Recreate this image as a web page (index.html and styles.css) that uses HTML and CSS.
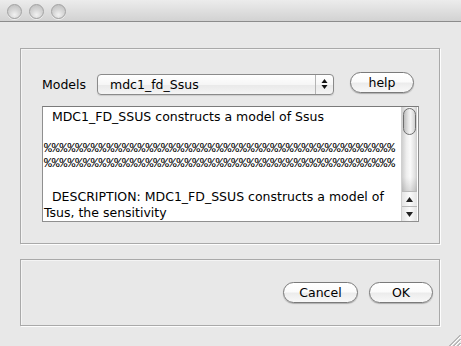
FILE: index.html
```html
<!DOCTYPE html>
<html>
<head>
<meta charset="utf-8">
<link rel="stylesheet" href="styles.css">
</head>
<body>
<div class="window">
  <div class="titlebar">
    <span class="light"></span><span class="light"></span><span class="light"></span>
  </div>
  <div class="content">
    <section class="panel panel-main">
      <div class="row">
        <span class="label">Models</span>
        <div class="combo">
          <span class="combo-text">mdc1_fd_Ssus</span>
          <span class="combo-arrows">
            <svg width="7" height="12" viewBox="0 0 7 12"><path d="M3.5 1 L6.5 5 L0.5 5 Z M3.5 11 L6.5 7 L0.5 7 Z" fill="#111"/></svg>
          </span>
        </div>
        <button class="btn btn-help">help</button>
      </div>
      <div class="textarea">
        <div class="text">
          <div class="line">  MDC1_FD_SSUS constructs a model of Ssus</div>
          <div class="line"> </div>
          <div class="line pct">%%%%%%%%%%%%%%%%%%%%%%%%%%%%%%%%%%%%%%%%%%%%%</div>
          <div class="line pct">%%%%%%%%%%%%%%%%%%%%%%%%%%%%%%%%%%%%%%%%%%%%%</div>
          <div class="line gap"> </div>
          <div class="line">  DESCRIPTION: MDC1_FD_SSUS constructs a model of</div>
          <div class="line">Tsus, the sensitivity</div>
        </div>
        <div class="scrollbar">
          <div class="track"><div class="thumb"></div></div>
          <div class="arrow arrow-up"><svg width="9" height="7" viewBox="0 0 9 7"><path d="M4.5 1 L8 6 L1 6 Z" fill="#222"/></svg></div>
          <div class="arrow arrow-down"><svg width="9" height="7" viewBox="0 0 9 7"><path d="M4.5 6 L8 1 L1 1 Z" fill="#222"/></svg></div>
        </div>
      </div>
    </section>
    <section class="panel panel-buttons">
      <button class="btn btn-cancel">Cancel</button>
      <button class="btn btn-ok">OK</button>
    </section>
  </div>
  <svg class="grip" width="13" height="12" viewBox="0 0 13 12">
    <path d="M12.5 1 L1.5 12 M12.5 5 L5.5 12 M12.5 9 L9.5 12" stroke="#8a8a8a" stroke-width="1"/>
    <path d="M13 2 L2.5 12.5 M13 6 L6.5 12.5 M13 10 L10.5 12.5" stroke="#ffffff" stroke-width="1"/>
  </svg>
</div>
</body>
</html>
```

FILE: styles.css
```css
html, body {
  margin: 0;
  padding: 0;
}
body {
  background: #e8e8e8;
  font-family: "DejaVu Sans", "Liberation Sans", sans-serif;
  font-size: 12.5px;
  color: #000;
}
.window {
  position: relative;
  width: 461px;
  height: 346px;
  overflow: hidden;
  background: #e8e8e8;
}
.titlebar {
  height: 21px;
  border-bottom: 1px solid #8c8c8c;
  background: linear-gradient(#ececec, #d2d2d2);
  display: flex;
  align-items: center;
  padding-left: 7px;
  gap: 7px;
  box-sizing: content-box;
}
.light {
  width: 13px;
  height: 13px;
  border-radius: 50%;
  border: 1px solid #a2a2a2;
  background: radial-gradient(circle at 50% 75%, #f2f2f2 0%, #d6d6d6 45%, #b9b9b9 100%);
  box-shadow: 0 1px 0 rgba(255,255,255,0.6);
  margin-top: 1px;
}
.content {
  padding: 26px 21px 0 20px;
  display: flex;
  flex-direction: column;
  gap: 15px;
}
.panel {
  border: 1px solid #a9a9a9;
  box-shadow: 1px 1px 0 #fdfdfd, inset 1px 1px 0 #f4f4f4;
}
.panel-main {
  height: 196px;
  box-sizing: border-box;
  padding: 24px 20px 0 21px;
}
.row {
  display: flex;
  align-items: center;
  height: 22px;
  margin-bottom: 11px;
}
.label {
  width: 55px;
  padding-top: 1px;
}
.combo {
  width: 237px;
  height: 21px;
  box-sizing: border-box;
  border: 1px solid #8a8a8a;
  border-radius: 4px;
  background: linear-gradient(#ffffff, #f6f6f6 50%, #e9e9e9 51%, #f4f4f4);
  display: flex;
  align-items: center;
  box-shadow: 0 1px 1px rgba(0,0,0,0.12);
}
.combo-text {
  flex: 1;
  padding-left: 12px;
}
.combo-arrows {
  width: 17px;
  height: 19px;
  border-left: 1px solid #b4b4b4;
  display: flex;
  align-items: center;
  justify-content: center;
}
.btn {
  font-family: "DejaVu Sans", "Liberation Sans", sans-serif;
  font-size: 12.5px;
  color: #000;
  height: 21px;
  border: 1px solid #7a7a7a;
  border-radius: 11px;
  background: linear-gradient(#ffffff, #fbfbfb 45%, #ececec 55%, #f8f8f8);
  box-shadow: 0 1px 1px rgba(0,0,0,0.25);
  padding: 0;
  line-height: 19px;
}
.btn-help {
  width: 64px;
  margin-left: 16px;
  margin-top: -3px;
}
.textarea {
  height: 116px;
  box-sizing: border-box;
  border: 1px solid #8f8f8f;
  border-top-color: #7a7a7a;
  background: #fff;
  display: flex;
}
.text {
  flex: 1;
  overflow: hidden;
  padding: 2px 0 0 1px;
}
.line {
  white-space: pre;
  height: 16px;
  line-height: 16px;
}
.line.gap {
  height: 18px;
}
.pct {
  font-family: "Liberation Mono", "DejaVu Sans Mono", monospace;
  font-size: 13px;
  height: 15px;
  line-height: 15px;
  -webkit-font-smoothing: antialiased;
}
.scrollbar {
  width: 15px;
  margin-right: 1px;
  display: flex;
  flex-direction: column;
  border-left: 1px solid #d0d0d0;
}
.track {
  flex: 1;
  background: linear-gradient(90deg, #cfcfcf, #eeeeee 30%, #fafafa 55%, #e2e2e2 85%, #cdcdcd);
  position: relative;
  padding-top: 1px;
}
.track::after {
  content: "";
  position: absolute;
  left: 0;
  right: 0;
  bottom: 0;
  height: 14px;
  background: linear-gradient(rgba(0,0,0,0), rgba(0,0,0,0.12));
}
.thumb {
  margin: 0 1px;
  height: 27px;
  box-sizing: border-box;
  border: 1px solid #6e6e6e;
  border-radius: 7px;
  background: linear-gradient(90deg, #bdbdbd, #e6e6e6 40%, #f4f4f4 60%, #d0d0d0);
}
.arrow {
  height: 15px;
  display: flex;
  align-items: center;
  justify-content: center;
  background: linear-gradient(90deg, #e4e4e4, #fbfbfb 50%, #e4e4e4);
  border-top: 1px solid #b9b9b9;
  box-sizing: border-box;
}
.panel-buttons {
  height: 67px;
  box-sizing: border-box;
  padding: 22px 6px 0 0;
  display: flex;
  justify-content: flex-end;
  align-items: flex-start;
  gap: 11px;
}
.btn-cancel {
  width: 75px;
}
.btn-ok {
  width: 64px;
}
.grip {
  position: absolute;
  right: 0;
  bottom: 0;
}
```
